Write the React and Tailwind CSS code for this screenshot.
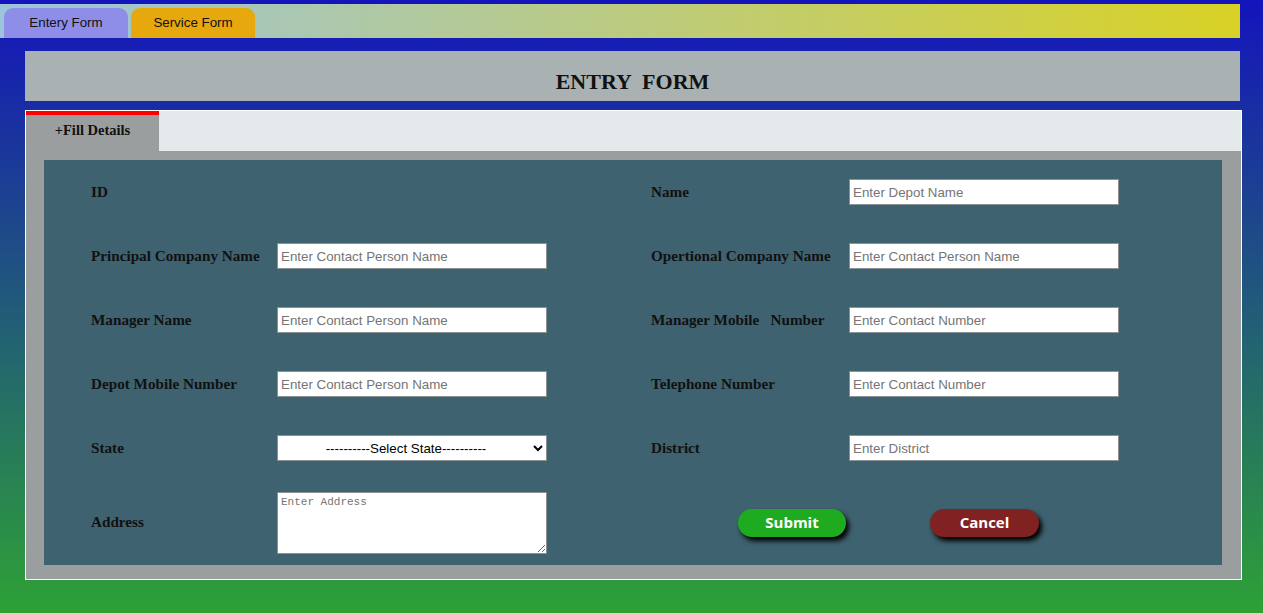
import { useState } from "react";

const fieldClass =
  "h-[26px] w-[270px] border border-[#8a8f92] bg-white px-[3px] font-['Liberation_Sans',Arial,sans-serif] text-[13.33px] text-black outline-none placeholder:text-[#757575]";

function Label({ children }) {
  return (
    <span className="whitespace-pre font-['Liberation_Serif',serif] text-[15.2px] font-bold text-[#111]">
      {children}
    </span>
  );
}

export default function App() {
  const [activeTab, setActiveTab] = useState("entry");

  return (
    <div className="min-h-screen bg-[linear-gradient(to_bottom,#1414bc,#2ea136)] pt-[4px]">
      {/* top navigation */}
      <div className="flex h-[34px] w-[1240px] items-end gap-[3px] bg-[linear-gradient(to_right,#9cc4dc,#d9d226)] pl-[4px]">
        <button
          type="button"
          onClick={() => setActiveTab("entry")}
          className="flex h-[30px] w-[124px] items-center justify-center rounded-t-[9px] bg-[#8e8ee8] pb-[1px] font-['Liberation_Sans',Arial,sans-serif] text-[13.33px] text-[#111]"
        >
          Entery Form
        </button>
        <button
          type="button"
          onClick={() => setActiveTab("service")}
          className="flex h-[30px] w-[124px] items-center justify-center rounded-t-[9px] bg-[#e6a80c] pb-[1px] font-['Liberation_Sans',Arial,sans-serif] text-[13.33px] text-[#111]"
        >
          Service Form
        </button>
      </div>

      <div className="ml-[25px] mt-[13px] h-[50px] w-[1215px] bg-[#a9b1b3] pt-[20px] text-center">
        <h2 className="whitespace-pre font-['Liberation_Serif',serif] text-[22px] font-bold leading-[22px] text-[#111]">
          ENTRY  FORM
        </h2>
      </div>

      <div className="ml-[25px] mt-[9px] w-[1217px] border border-white bg-[#9a9e9f] pb-[14px]">
        <div className="flex h-[40px] bg-[#e4e9ec]">
          <div className="flex w-[133px] items-center justify-center border-t-4 border-[#ff0000] bg-[#9a9e9f] pb-[4px]">
            <span className="font-['Liberation_Serif',serif] text-[14.5px] font-bold text-[#111]">
              +Fill Details
            </span>
          </div>
        </div>

        <form
          onSubmit={(e) => e.preventDefault()}
          className="ml-[18px] mt-[9px] grid w-[1178px] grid-cols-[186px_270px_104px_198px_270px] grid-rows-[64px_64px_64px_64px_64px_85px] items-center bg-[#3e626f] pl-[47px]"
        >
          <Label>ID</Label>
          <div />
          <div />
          <Label>Name</Label>
          <input className={fieldClass} placeholder="Enter Depot Name" />

          <Label>Principal Company Name</Label>
          <input className={fieldClass} placeholder="Enter Contact Person Name" />
          <div />
          <Label>Opertional Company Name</Label>
          <input className={fieldClass} placeholder="Enter Contact Person Name" />

          <Label>Manager Name</Label>
          <input className={fieldClass} placeholder="Enter Contact Person Name" />
          <div />
          <Label>Manager Mobile   Number</Label>
          <input className={fieldClass} placeholder="Enter Contact Number" />

          <Label>Depot Mobile Number</Label>
          <input className={fieldClass} placeholder="Enter Contact Person Name" />
          <div />
          <Label>Telephone Number</Label>
          <input className={fieldClass} placeholder="Enter Contact Number" />

          <Label>State</Label>
          <select
            defaultValue=""
            className="h-[26px] w-[270px] border border-[#8a8f92] bg-white font-['Liberation_Sans',Arial,sans-serif] text-[13.33px] text-black [text-align-last:center]"
          >
            <option value="">----------Select State----------</option>
          </select>
          <div />
          <Label>District</Label>
          <input className={fieldClass} placeholder="Enter District" />

          <Label>Address</Label>
          <textarea
            placeholder="Enter Address"
            className="h-[62px] w-[270px] border border-[#8a8f92] bg-white px-[3px] py-[1px] font-['Liberation_Mono',monospace] text-[11px] text-black outline-none placeholder:text-[#757575]"
          />
          <div />
          <div className="col-span-2 flex items-center pl-[87px]">
            <button
              type="submit"
              className="h-[28px] w-[108px] rounded-full bg-[#1fab1f] font-['Open_Sans',sans-serif] text-[15px] font-bold text-white shadow-[3px_4px_5px_#000]"
            >
              Submit
            </button>
            <button
              type="button"
              className="ml-[84px] h-[28px] w-[109px] rounded-full bg-[#812222] font-['Open_Sans',sans-serif] text-[15px] font-bold text-white shadow-[3px_4px_5px_#000]"
            >
              Cancel
            </button>
          </div>
        </form>
      </div>
    </div>
  );
}
